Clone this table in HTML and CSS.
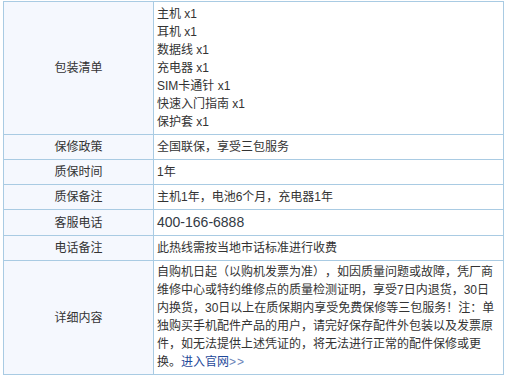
FILE: index.html
```html
<!DOCTYPE html>
<html lang="zh-CN">
<head>
<meta charset="utf-8">
<link rel="stylesheet" href="styles.css">
</head>
<body>
<table class="spec">
  <colgroup><col class="c-label"><col class="c-value"></colgroup>
  <tr>
    <th>包装清单</th>
    <td>
      <div>主机 x1</div>
      <div>耳机 x1</div>
      <div>数据线 x1</div>
      <div>充电器 x1</div>
      <div>SIM卡通针 x1</div>
      <div>快速入门指南 x1</div>
      <div>保护套 x1</div>
    </td>
  </tr>
  <tr><th>保修政策</th><td>全国联保，享受三包服务</td></tr>
  <tr><th>质保时间</th><td>1年</td></tr>
  <tr><th>质保备注</th><td>主机1年，电池6个月，充电器1年</td></tr>
  <tr><th>客服电话</th><td><span class="phone">400-166-6888</span></td></tr>
  <tr><th>电话备注</th><td>此热线需按当地市话标准进行收费</td></tr>
  <tr>
    <th>详细内容</th>
    <td class="long">自购机日起（以购机发票为准），如因质量问题或故障，凭厂商维修中心或特约维修点的质量检测证明，享受7日内退货，30日内换货，30日以上在质保期内享受免费保修等三包服务！注：单独购买手机配件产品的用户，请完好保存配件外包装以及发票原件，如无法提供上述凭证的，将无法进行正常的配件保修或更换。<a class="link" href="#">进入官网</a><span class="more">&gt;&gt;</span></td>
  </tr>
</table>
</body>
</html>
```

FILE: styles.css
```css
html, body {
  margin: 0;
  padding: 0;
  background: #ffffff;
}

body {
  font-family: "Liberation Sans", "Noto Sans CJK SC", sans-serif;
  font-size: 12px;
  line-height: 18px;
  color: #333333;
}

.spec {
  margin: 1px 0 0 3px;
  width: 500px;
  border-collapse: collapse;
  table-layout: fixed;
}

.c-label {
  width: 150px;
}

.c-value {
  width: 350px;
}

.spec th,
.spec td {
  border: 1px solid #a9cbe3;
  padding: 3px;
  vertical-align: middle;
}

.spec th {
  background: #f5f8fe;
  font-weight: normal;
  text-align: center;
}

.spec td {
  text-align: left;
  padding-left: 3px;
  padding-right: 6px;
}

.spec td.long {
  padding-top: 2px;
  padding-bottom: 3px;
  word-break: break-all;
  text-spacing-trim: space-all;
}

.phone {
  font-size: 14px;
  color: #333a44;
}

.link {
  color: #1f4a9a;
  text-decoration: none;
}

.more {
  color: #6a82b8;
  letter-spacing: 1px;
}
```
